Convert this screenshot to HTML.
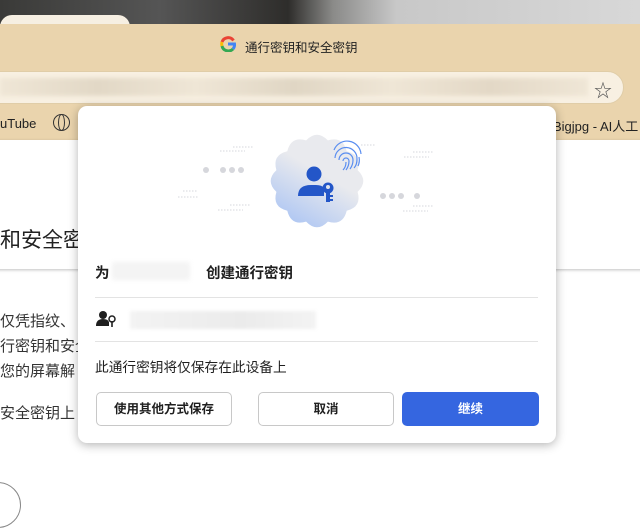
<!DOCTYPE html>
<html><head><meta charset="utf-8"><style>
*{margin:0;padding:0;box-sizing:border-box}
body{width:640px;height:506px;overflow:hidden;position:relative;background:#fff;font-family:"Liberation Sans","Noto Sans CJK SC",sans-serif;color:#1f1f1f}
.abs{position:absolute}
</style></head><body>
<div class="abs" style="left:0;top:0;width:640px;height:24px;background:linear-gradient(90deg,#3a3a38 0%,#555 25%,#2e2d2b 45%,#8a8a88 52%,#c8c8c8 62%,#d8d8d8 100%)"></div>
<div class="abs" style="left:0;top:15px;width:130px;height:14px;background:#f6efe2;border-radius:12px 12px 0 0"></div>
<div class="abs" style="left:0;top:24px;width:640px;height:116px;background:#ead4ad"></div>
<svg class="abs" style="left:220px;top:36px" width="16" height="16" viewBox="0 0 16 16"><g fill="none" stroke-width="3"><path d="M13.5 4.5A6.5 6.5 0 0 0 2 6" stroke="#ea4335"/><path d="M2 6a6.5 6.5 0 0 0 0 4" stroke="#fbbc05"/><path d="M2 10a6.5 6.5 0 0 0 11 3" stroke="#34a853"/><path d="M13 13a6.5 6.5 0 0 0 1.5-5H8" stroke="#4285f4"/></g></svg>
<div class="abs" style="left:245px;top:37px;font-size:12.5px;color:#222">通行密钥和安全密钥</div>
<div class="abs" style="left:-20px;top:71px;width:644px;height:33px;background:#f8f0e2;border-radius:17px;border:1px solid #e0cda8"></div>
<div class="abs" style="left:0;top:78px;width:588px;height:18px;background:linear-gradient(90deg,#efe6d6,#e2d8c6,#efe6d6,#e0d6c4,#efe6d6,#e3d8c6,#efe6d6);filter:blur(2px)"></div>
<div class="abs" style="left:594px;top:77px;font-size:18px;color:#555">☆</div>
<div class="abs" style="left:0;top:116px;font-size:13px;color:#222">uTube</div>
<div class="abs" style="left:53px;top:114px;width:17px;height:17px;border:1.5px solid #333;border-radius:50%"></div>
<div class="abs" style="left:58px;top:114px;width:7px;height:17px;border:1.5px solid #333;border-radius:50%"></div>
<div class="abs" style="left:553px;top:116px;font-size:13px;color:#222;white-space:nowrap">Bigjpg - AI人工</div>
<div class="abs" style="left:-10px;top:140px;width:660px;height:129px;background:#fff;box-shadow:0 1px 3px rgba(0,0,0,.25)"></div>
<div class="abs" style="left:0;top:224px;font-size:21px;color:#222">和安全密</div>
<div class="abs" style="left:0;top:309px;font-size:15px;line-height:25px;color:#333">仅凭指纹、<br>行密钥和安全<br>您的屏幕解</div>
<div class="abs" style="left:0;top:402px;font-size:15px;color:#333">安全密钥上</div>
<div class="abs" style="left:-25px;top:482px;width:46px;height:46px;border:1px solid #888;border-radius:50%"></div>

<div class="abs" style="left:78px;top:106px;width:478px;height:337px;background:#fff;border-radius:9px;box-shadow:0 2px 10px rgba(0,0,0,.3)">
<svg class="abs" style="left:0;top:0" width="478" height="140">
<defs><linearGradient id="g" gradientUnits="userSpaceOnUse" x1="265" y1="40" x2="215" y2="125"><stop offset="0.35" stop-color="#e9eaee"/><stop offset="1" stop-color="#a9c3f3"/></linearGradient></defs>
<path fill="url(#g)" d="M279.6 64.1 Q291 75 279.6 85.9 Q284 101 268.7 104.7 Q265 120 249.9 115.6 Q239 127 228.1 115.6 Q213 120 209.3 104.7 Q194 101 198.4 85.9 Q187 75 198.4 64.1 Q194 49 209.3 45.3 Q213 30 228.1 34.4 Q239 23 249.9 34.4 Q265 30 268.7 45.3 Q284 49 279.6 64.1Z"/>
<g fill="#2356c8"><circle cx="236" cy="68" r="7.5"/><path d="M220 90q0-11 13-11h5q6 0 8 3v8z"/><circle cx="250" cy="82" r="5.5"/><rect x="248" y="84" width="4" height="12"/><rect x="252" y="89" width="3" height="2"/><rect x="252" y="93" width="3" height="2"/></g>
<circle cx="250" cy="81" r="2" fill="#e0e4ee"/>
<g fill="none" stroke="#5a8ef0" stroke-width="1.2"><path d="M256 44a14 14 0 0 1 27 4"/><path d="M257 52a11 11 0 0 1 22 1q0 6-3 9"/><path d="M261 54a7 7 0 0 1 14 0q0 5-3 9"/><path d="M265 55a3 3 0 0 1 6 0q0 5-3 9"/><path d="M268 56q0 5-3 8"/><path d="M281 51q1 5-1 9"/></g>
<g fill="#d6d7dc"><circle cx="128" cy="64" r="3"/><circle cx="145" cy="64" r="3"/><circle cx="154" cy="64" r="3"/><circle cx="163" cy="64" r="3"/><circle cx="305" cy="90" r="3"/><circle cx="314" cy="90" r="3"/><circle cx="323" cy="90" r="3"/><circle cx="339" cy="90" r="3"/></g>
<g stroke="#d6d7dc" stroke-width="1" stroke-dasharray="1.5 1.5"><path d="M142 45h25M155 41h20M100 91h20M105 85h15M140 104h25M152 99h20M283 39h15M326 51h25M335 46h20M325 105h25M335 100h20"/></g>
</svg>
<div class="abs" style="left:17px;top:156px;font-size:14.5px;font-weight:bold">为</div>
<div class="abs" style="left:34px;top:156px;width:78px;height:18px;background:#f4f4f4;filter:blur(2px)"></div>
<div class="abs" style="left:128px;top:156px;font-size:14.5px;font-weight:bold">创建通行密钥</div>
<div class="abs" style="left:17px;top:191px;width:443px;height:1px;background:#e3e3e3"></div>
<svg class="abs" style="left:18px;top:204px" width="22" height="18"><g fill="#1f1f1f"><circle cx="7" cy="5" r="4"/><path d="M0 16q0-7 7-7q5 0 6 3v4z"/><circle cx="16" cy="9" r="3" fill="none" stroke="#1f1f1f" stroke-width="1.5"/><rect x="15.2" y="11" width="1.6" height="6"/></g></svg>
<div class="abs" style="left:52px;top:205px;width:186px;height:18px;background:linear-gradient(90deg,#f3f3f3,#ebebeb 60%,#f3f3f3);filter:blur(1.5px)"></div>
<div class="abs" style="left:17px;top:235px;width:443px;height:1px;background:#e3e3e3"></div>
<div class="abs" style="left:17px;top:250px;font-size:13.7px">此通行密钥将仅保存在此设备上</div>
<div class="abs" style="left:18px;top:286px;width:136px;height:34px;border:1px solid #c8c8c8;border-radius:5px;font-size:12.5px;font-weight:bold;text-align:center;line-height:32px">使用其他方式保存</div>
<div class="abs" style="left:180px;top:286px;width:136px;height:34px;border:1px solid #c8c8c8;border-radius:5px;font-size:12.5px;font-weight:bold;text-align:center;line-height:32px">取消</div>
<div class="abs" style="left:324px;top:286px;width:137px;height:34px;background:#3566e0;border-radius:5px;font-size:12.5px;font-weight:bold;color:#fff;text-align:center;line-height:34px">继续</div>
</div>
</body></html>
